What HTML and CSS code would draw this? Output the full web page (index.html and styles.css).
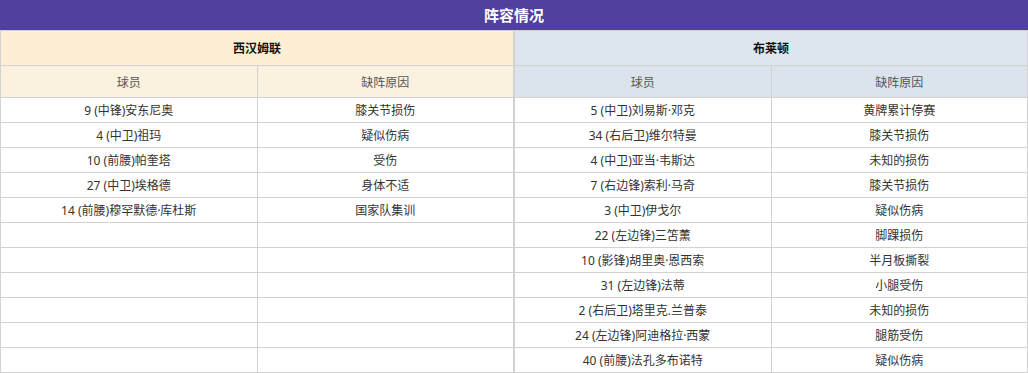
FILE: index.html
```html
<!DOCTYPE html>
<html lang="zh">
<head>
<meta charset="utf-8">
<title>阵容情况</title>
<link rel="stylesheet" href="styles.css">
</head>
<body>
<div class="panel">
  <div class="title">阵容情况</div>
  <div class="tables">
    <table class="team home">
      <thead>
        <tr class="team-row"><th colspan="2">西汉姆联</th></tr>
        <tr class="sub-row"><th>球员</th><th>缺阵原因</th></tr>
      </thead>
      <tbody>
        <tr><td>9 (中锋)安东尼奥</td><td>膝关节损伤</td></tr>
        <tr><td>4 (中卫)祖玛</td><td>疑似伤病</td></tr>
        <tr><td>10 (前腰)帕奎塔</td><td>受伤</td></tr>
        <tr><td>27 (中卫)埃格德</td><td>身体不适</td></tr>
        <tr><td>14 (前腰)穆罕默德·库杜斯</td><td>国家队集训</td></tr>
        <tr><td></td><td></td></tr>
        <tr><td></td><td></td></tr>
        <tr><td></td><td></td></tr>
        <tr><td></td><td></td></tr>
        <tr><td></td><td></td></tr>
        <tr><td></td><td></td></tr>
      </tbody>
    </table>
    <table class="team away">
      <thead>
        <tr class="team-row"><th colspan="2">布莱顿</th></tr>
        <tr class="sub-row"><th>球员</th><th>缺阵原因</th></tr>
      </thead>
      <tbody>
        <tr><td>5 (中卫)刘易斯·邓克</td><td>黄牌累计停赛</td></tr>
        <tr><td>34 (右后卫)维尔特曼</td><td>膝关节损伤</td></tr>
        <tr><td>4 (中卫)亚当·韦斯达</td><td>未知的损伤</td></tr>
        <tr><td>7 (右边锋)索利·马奇</td><td>膝关节损伤</td></tr>
        <tr><td>3 (中卫)伊戈尔</td><td>疑似伤病</td></tr>
        <tr><td>22 (左边锋)三笘薰</td><td>脚踝损伤</td></tr>
        <tr><td>10 (影锋)胡里奥·恩西索</td><td>半月板撕裂</td></tr>
        <tr><td>31 (左边锋)法蒂</td><td>小腿受伤</td></tr>
        <tr><td>2 (右后卫)塔里克.兰普泰</td><td>未知的损伤</td></tr>
        <tr><td>24 (左边锋)阿迪格拉·西蒙</td><td>腿筋受伤</td></tr>
        <tr><td>40 (前腰)法孔多布诺特</td><td>疑似伤病</td></tr>
      </tbody>
    </table>
  </div>
</div>
</body>
</html>
```

FILE: styles.css
```css
* { box-sizing: border-box; }
html, body {
  margin: 0;
  padding: 0;
  background: #ffffff;
}
body {
  font-family: "Noto Sans", "Noto Sans CJK SC", sans-serif;
  font-size: 12px;
  color: #333333;
}
.panel {
  width: 1028px;
}
.title {
  height: 30px;
  line-height: 30px;
  background: #51409e;
  color: #ffffff;
  font-size: 15px;
  font-weight: bold;
  text-align: center;
}
.tables {
  display: flex;
}
.team {
  width: 514px;
  border-collapse: collapse;
  table-layout: fixed;
}
.team th, .team td {
  border: 1px solid #d2d2d2;
  text-align: center;
  padding: 0;
  font-weight: normal;
  white-space: nowrap;
}
.team-row th {
  height: 35px;
  font-weight: bold;
  color: #111111;
  font-size: 12px;
}
.sub-row th {
  height: 32px;
  color: #555555;
}
.team td {
  height: 25px;
  color: #333333;
}
.home .team-row th { background: #fdefd3; }
.home .sub-row th { background: #faf1df; }
.away .team-row th { background: #dde6ee; }
.away .sub-row th { background: #dbe3ec; }
```
